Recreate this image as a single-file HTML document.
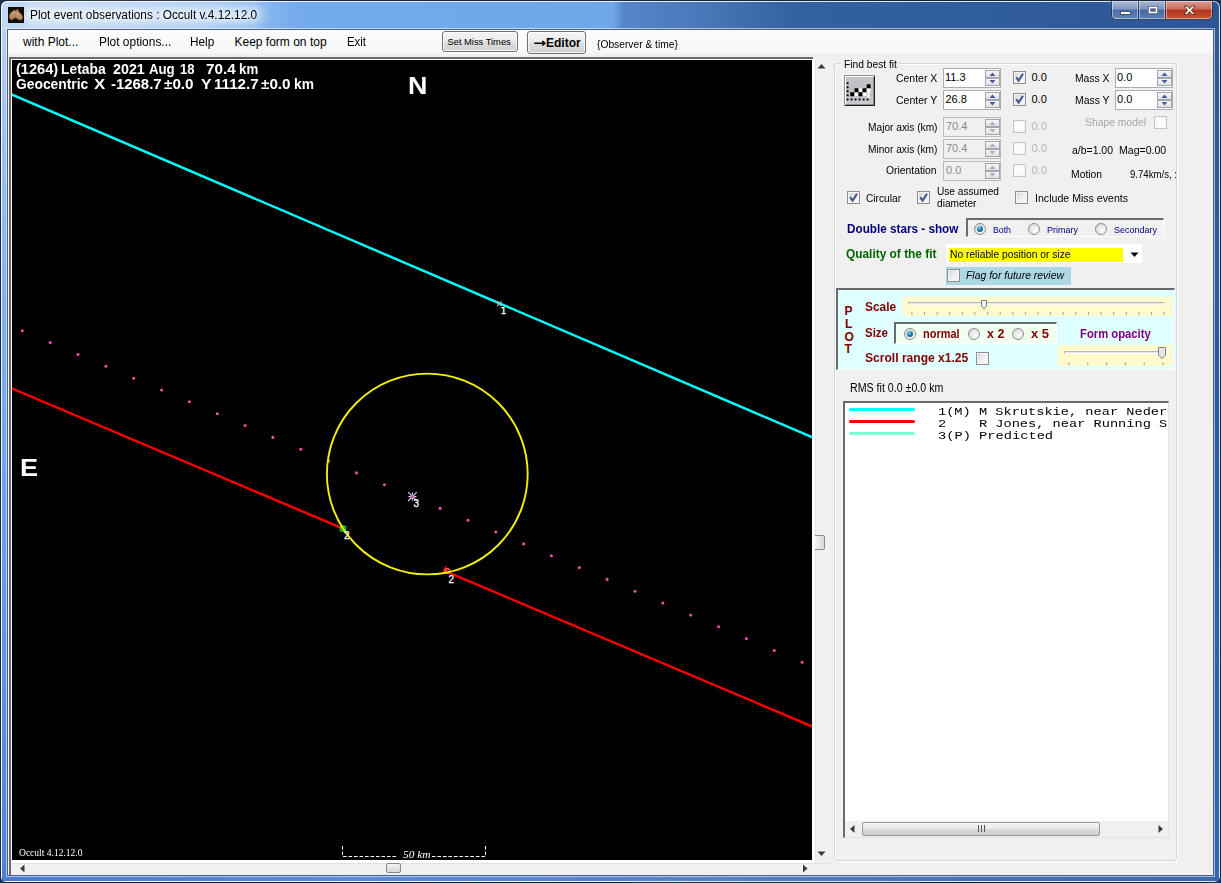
<!DOCTYPE html>
<html lang="en">
<head>
<meta charset="utf-8">
<title>Plot event observations : Occult v.4.12.12.0</title>
<style>

html,body{margin:0;padding:0;background:#1d2f52;}
body{width:1221px;height:883px;overflow:hidden;position:relative;}
#win{position:absolute;left:0;top:0;width:1221px;height:883px;overflow:hidden;font:11px "Liberation Sans",sans-serif;}
#win div,#win svg,#win span.t{position:absolute;box-sizing:border-box;}
span.t{white-space:pre;line-height:normal;transform-origin:0 50%;margin:0;padding:0;}
.frame{left:0;top:0;width:1221px;height:883px;border-radius:7px 7px 6px 6px;
 background:linear-gradient(90deg,#c2d8f3 0px,#bdd5f3 60px,#a6c9f2 200px,#86b7ef 262px,#73aaeb 300px,#6fa7ea 612px,#5686c9 622px,#4a78b8 700px,#33619f 800px,#2e5a9a 1100px,#2c5594 1221px);
 border:1px solid #17253f;box-shadow:inset 0 0 0 1px rgba(255,255,255,.85);}
.cbtn{top:1px;height:19px;border:1px solid rgba(20,35,70,.75);border-top:none;box-shadow:inset 0 0 0 1px rgba(255,255,255,.45);}
.chk{width:13px;height:13px;border:1px solid #8e8f8f;background:linear-gradient(135deg,#cfd2d6 0%,#eceef0 50%,#fbfbfb 100%);box-shadow:inset 0 0 0 1px #f4f4f4;}
.chk.dis{border-color:#c3c6ca;background:#fbfbfc;}
.rad{width:12px;height:12px;border-radius:50%;border:1px solid #8e8f8f;background:radial-gradient(circle at 65% 65%,#fdfdfd 0%,#e4e6e8 55%,#c4c7ca 100%);}
.rad.on::after{content:"";position:absolute;left:2px;top:2px;width:6px;height:6px;border-radius:50%;background:radial-gradient(circle at 38% 32%,#8fdcf2 0%,#1e86b6 42%,#0a3c66 100%);}
.num{width:58px;height:20px;border:1px solid #abadb3;background:#fff;}
.num.dis{background:#f0f0f0;border-color:#b9bcc2;}
.spb{left:41px;width:15px;height:8px;border:1px solid #a3a6ab;background:linear-gradient(#f7f7f7,#dfe1e4);}
.sunk{border-style:solid;border-width:2px 1px 1px 2px;border-color:#6a6a6a #fff #fff #6a6a6a;}
.btn{border:1px solid #707070;border-radius:3px;background:linear-gradient(#f4f4f4 0%,#ececec 48%,#dedede 52%,#d1d1d1 100%);box-shadow:inset 0 0 0 1px rgba(255,255,255,.8);}

</style>
</head>
<body>
<div id="win">
<div class="frame" style="left:0px;top:0px;width:1221px;height:883px;"></div>
<div style="left:24px;top:6px;width:240px;height:18px;background:rgba(255,255,255,.55);filter:blur(6px);border-radius:9px;"></div>
<svg width="16" height="16" viewBox="0 0 16 16" style="left:8px;top:7px"><rect width="16" height="16" fill="#120d08"/><path d="M1.3 9 L2.4 6.2 L4.9 3.9 L6.6 3.1 L7.8 4.4 L9.3 2 L10.9 5 L13.4 7.4 L14.8 10 L13.6 12.6 L11 12.9 L9.1 11.2 L7 10.7 L4.2 12.5 L2 12.1 Z" fill="#b78a62" stroke="#8d6848" stroke-width=".8" stroke-linejoin="round"/><path d="M3.4 7.6 L6.4 5 L9 6.2 L11.2 8" fill="none" stroke="#d6ab80" stroke-width="1.1"/></svg>
<div class="cbtn" style="left:1111px;top:1px;width:28px;height:19px;border-radius:0 0 0 5px;background:linear-gradient(#a9bbd8 0%,#8299c0 45%,#4b6ea4 50%,#5f84b8 100%);"></div>
<div class="cbtn" style="left:1138px;top:1px;width:28px;height:19px;background:linear-gradient(#a5b7d5 0%,#7c94bc 45%,#466aa0 50%,#587db2 100%);"></div>
<div class="cbtn" style="left:1165px;top:1px;width:48px;height:19px;border-radius:0 0 5px 0;background:linear-gradient(#dc9f94 0%,#c96a5a 45%,#b3321c 50%,#c35633 100%);"></div>
<svg width="102" height="19" viewBox="0 0 102 19" style="left:1111px;top:1px"><rect x="9.5" y="10.5" width="10" height="3" fill="#fff" stroke="#44536e" stroke-width="1"/><rect x="37.5" y="5.5" width="9" height="7" fill="none" stroke="#44536e" stroke-width="1"/><rect x="38.5" y="6.5" width="7" height="5" fill="none" stroke="#fff" stroke-width="1.6"/><rect x="40" y="8" width="4" height="2" fill="#56709a" stroke="#44536e" stroke-width=".6"/><path d="M73 5 L76 5 L78.5 7.8 L81 5 L84 5 L80.4 9.2 L84 13.5 L81 13.5 L78.5 10.6 L76 13.5 L73 13.5 L76.6 9.2 Z" fill="#fff" stroke="#5a2a24" stroke-width=".9"/></svg>
<div style="left:2px;top:30px;width:5px;height:851px;background:linear-gradient(180deg,#b9d0f1 0px,#9dbff0 120px,#84b1ef 260px,#6fa4ee 430px,#5f92e2 650px,#4f7fd2 851px);"></div>
<div style="left:2px;top:876px;width:1217px;height:5px;background:linear-gradient(90deg,#4c7bd3 0px,#5b8ad6 350px,#5482cc 700px,#4570b4 1000px,#3c67aa 1217px);"></div>
<div style="left:1214px;top:30px;width:5px;height:851px;background:linear-gradient(180deg,#2f5a9c 0px,#2c5aa4 400px,#3466b4 851px);"></div>
<div style="left:6px;top:28px;width:1209px;height:849px;background:rgba(255,255,255,.55);"></div>
<div style="left:7px;top:29px;width:1207px;height:847px;background:#4d5f7a;"></div>
<div style="left:8px;top:30px;width:1205px;height:845px;background:#f0f0f0;"></div>
<div style="left:8px;top:30px;width:1205px;height:24px;background:linear-gradient(#fcfcfd,#f6f7f9);"></div>
<div class="btn" style="left:442px;top:31px;width:76px;height:21px;"></div>
<div class="btn" style="left:527px;top:31px;width:59px;height:23px;"></div>
<div style="left:9px;top:57px;width:804px;height:818px;background:#6b676d;"></div>
<div style="left:11px;top:59px;width:818px;height:816px;background:#fff;"></div>
<div style="left:12px;top:60px;width:800px;height:800px;background:#000;"></div>
<div style="left:815px;top:59px;width:14px;height:804px;background:#f1f1f3;border-left:1px solid #e4e4e8;"></div>
<div style="left:815px;top:535px;width:10px;height:15px;background:linear-gradient(90deg,#f3f3f3,#d9dadc);border:1px solid #8d8791;border-left:none;border-radius:0 2px 2px 0;"></div>
<div style="left:11px;top:863px;width:818px;height:12px;background:#f1f1f3;border-top:1px solid #e2e2e6;"></div>
<div style="left:386px;top:863px;width:15px;height:10px;background:linear-gradient(#f3f3f3,#d4d5d8);border:1px solid #8d8791;border-radius:2px;"></div>
<svg width="830" height="20" viewBox="0 0 830 20" style="left:0;top:860px"><path d="M20 8.5 L24.5 4.5 L24.5 12.5 Z" fill="#3c3c3c"/><path d="M807.5 8.5 L803 4.5 L803 12.5 Z" fill="#3c3c3c"/></svg>
<svg width="14" height="804" viewBox="0 0 14 804" style="left:815px;top:59px"><path d="M6.5 5 L2.5 9.5 L10.5 9.5 Z" fill="#3c3c3c"/><path d="M6.5 797 L2.5 792.5 L10.5 792.5 Z" fill="#3c3c3c"/></svg>
<div style="left:829px;top:54px;width:384px;height:821px;background:#f0f0f0;"></div>
<svg width="800" height="800" viewBox="0 0 800 800" style="left:12px;top:60px"><line x1="-2" y1="33.8" x2="802" y2="378" stroke="#00ffff" stroke-width="2.4"/><line x1="-2" y1="327.6" x2="330.6" y2="468.4" stroke="#ff0000" stroke-width="2.4"/><line x1="432" y1="510.6" x2="802" y2="667.2" stroke="#ff0000" stroke-width="2.4"/><circle cx="10.3" cy="270.8" r="1.55" fill="#e64fae"/><circle cx="38.2" cy="282.6" r="1.55" fill="#e64fae"/><circle cx="66.0" cy="294.5" r="1.55" fill="#e64fae"/><circle cx="93.9" cy="306.3" r="1.55" fill="#e64fae"/><circle cx="121.7" cy="318.2" r="1.55" fill="#e64fae"/><circle cx="149.6" cy="330.0" r="1.55" fill="#e64fae"/><circle cx="177.4" cy="341.8" r="1.55" fill="#e64fae"/><circle cx="205.3" cy="353.7" r="1.55" fill="#e64fae"/><circle cx="233.1" cy="365.5" r="1.55" fill="#e64fae"/><circle cx="260.9" cy="377.4" r="1.55" fill="#e64fae"/><circle cx="288.8" cy="389.2" r="1.55" fill="#e64fae"/><circle cx="316.7" cy="401.0" r="1.55" fill="#e64fae"/><circle cx="344.5" cy="412.9" r="1.55" fill="#e64fae"/><circle cx="372.4" cy="424.7" r="1.55" fill="#e64fae"/><circle cx="400.2" cy="436.6" r="1.55" fill="#e64fae"/><circle cx="428.1" cy="448.4" r="1.55" fill="#e64fae"/><circle cx="455.9" cy="460.2" r="1.55" fill="#e64fae"/><circle cx="483.8" cy="472.1" r="1.55" fill="#e64fae"/><circle cx="511.6" cy="483.9" r="1.55" fill="#e64fae"/><circle cx="539.4" cy="495.8" r="1.55" fill="#e64fae"/><circle cx="567.3" cy="507.6" r="1.55" fill="#e64fae"/><circle cx="595.1" cy="519.4" r="1.55" fill="#e64fae"/><circle cx="623.0" cy="531.3" r="1.55" fill="#e64fae"/><circle cx="650.9" cy="543.1" r="1.55" fill="#e64fae"/><circle cx="678.7" cy="555.0" r="1.55" fill="#e64fae"/><circle cx="706.5" cy="566.8" r="1.55" fill="#e64fae"/><circle cx="734.4" cy="578.6" r="1.55" fill="#e64fae"/><circle cx="762.2" cy="590.5" r="1.55" fill="#e64fae"/><circle cx="790.1" cy="602.3" r="1.55" fill="#e64fae"/><path d="M485 241.5 L489.5 246 M489.5 241.5 L485 246" stroke="#b9b9c9" stroke-width="1.1"/><circle cx="330.9" cy="468.6" r="2.6" fill="none" stroke="#00e000" stroke-width="1.5"/><path d="M327.6 471 L334.4 466" stroke="#19a83c" stroke-width="1.4"/><path d="M430.5 512.5 L433.5 505.2 L436 511 Z" fill="#ff0000"/><circle cx="435.3" cy="511" r="2.3" fill="none" stroke="#ff7d3a" stroke-width="1.2"/><path d="M396 432.2 L404.8 441 M404.8 432.2 L396 441 M400.4 432.6 L400.4 440.6 M396.4 436.6 L404.4 436.6" stroke="#c7cbe6" stroke-width="1.2"/><circle cx="400.4" cy="436.6" r="1.5" fill="#f04fa8"/><circle cx="415.3" cy="414" r="100.4" fill="none" stroke="#f2f200" stroke-width="1.9"/><path d="M330.5 786 L330.5 796.5 L386 796.5" fill="none" stroke="#fff" stroke-width="1" stroke-dasharray="3.6 1.9"/><path d="M473.5 786 L473.5 796.5 L420 796.5" fill="none" stroke="#fff" stroke-width="1" stroke-dasharray="3.6 1.9"/></svg>
<div style="left:834px;top:63px;width:343px;height:798px;border:1px solid #d2d6dd;border-radius:3px;box-shadow:inset 1px 1px 0 #fff,1px 1px 0 #fff;"></div>
<div style="left:841px;top:58px;width:58px;height:12px;background:#f0f0f0;"></div>
<div style="left:844px;top:75px;width:31px;height:31px;background:#8f9390;"></div>
<div style="left:845px;top:76px;width:30px;height:30px;background:#1c1c1c;"></div>
<div style="left:845px;top:76px;width:28.6px;height:28.6px;background:#fff;"></div>
<div style="left:846.4px;top:77.4px;width:27.2px;height:27.2px;background:#8c8c8c;"></div>
<div style="left:846.4px;top:77.4px;width:26.4px;height:26.4px;background:linear-gradient(180deg,#c6c3c8 0%,#c0bdc2 55%,#cdcbcf 100%);"></div>
<svg width="31" height="31" viewBox="0 0 31 31" style="left:844px;top:75px"><rect x="2.6" y="7.2" width="2" height="2" rx=".6" fill="#000"/><rect x="2.6" y="11.2" width="2" height="2" rx=".6" fill="#000"/><rect x="2.6" y="15.3" width="2" height="2" rx=".6" fill="#000"/><rect x="2.6" y="19.3" width="2" height="2" rx=".6" fill="#000"/><rect x="2.6" y="23.4" width="2" height="2" rx=".6" fill="#000"/><rect x="6.6" y="23.4" width="2" height="2" rx=".6" fill="#000"/><rect x="10.6" y="23.4" width="2" height="2" rx=".6" fill="#000"/><rect x="14.6" y="23.4" width="2" height="2" rx=".6" fill="#000"/><rect x="18.6" y="23.4" width="2" height="2" rx=".6" fill="#000"/><rect x="22.6" y="23.4" width="2" height="2" rx=".6" fill="#000"/><rect x="10.7" y="17.4" width="3.6" height="3.6" fill="#fff"/><rect x="14.6" y="13.4" width="3.6" height="3.6" fill="#fff"/><rect x="18.7" y="17.4" width="3.6" height="3.6" fill="#fff"/><rect x="22.8" y="13.4" width="3.6" height="3.6" fill="#fff"/><rect x="23.2" y="17" width="2.6" height="6" fill="#eee"/><rect x="6.2" y="17.2" width="4" height="4" rx=".5" fill="#000"/><rect x="10.5" y="13.2" width="4" height="4" rx=".5" fill="#000"/><rect x="14.4" y="17.2" width="4" height="4" rx=".5" fill="#000"/><rect x="18.5" y="13.2" width="4" height="4" rx=".5" fill="#000"/><rect x="22.6" y="9.3" width="4" height="4" rx=".5" fill="#000"/></svg>
<div class="num" style="left:943px;top:68px"><div class="spb" style="top:1px"><svg width="13" height="6" viewBox="0 0 13 6" style="left:0;top:0"><path d="M3.5 5 L6.5 1.6 L9.5 5 Z" fill="#4a5aa2"/></svg></div><div class="spb" style="top:9px"><svg width="13" height="6" viewBox="0 0 13 6" style="left:0;top:0"><path d="M3.5 1 L6.5 4.4 L9.5 1 Z" fill="#4a5aa2"/></svg></div></div>
<div class="num" style="left:943px;top:90px"><div class="spb" style="top:1px"><svg width="13" height="6" viewBox="0 0 13 6" style="left:0;top:0"><path d="M3.5 5 L6.5 1.6 L9.5 5 Z" fill="#4a5aa2"/></svg></div><div class="spb" style="top:9px"><svg width="13" height="6" viewBox="0 0 13 6" style="left:0;top:0"><path d="M3.5 1 L6.5 4.4 L9.5 1 Z" fill="#4a5aa2"/></svg></div></div>
<div class="num dis" style="left:943px;top:117px"><div class="spb" style="top:1px"><svg width="13" height="6" viewBox="0 0 13 6" style="left:0;top:0"><path d="M3.5 5 L6.5 1.6 L9.5 5 Z" fill="#a9b0c8"/></svg></div><div class="spb" style="top:9px"><svg width="13" height="6" viewBox="0 0 13 6" style="left:0;top:0"><path d="M3.5 1 L6.5 4.4 L9.5 1 Z" fill="#a9b0c8"/></svg></div></div>
<div class="num dis" style="left:943px;top:139px"><div class="spb" style="top:1px"><svg width="13" height="6" viewBox="0 0 13 6" style="left:0;top:0"><path d="M3.5 5 L6.5 1.6 L9.5 5 Z" fill="#a9b0c8"/></svg></div><div class="spb" style="top:9px"><svg width="13" height="6" viewBox="0 0 13 6" style="left:0;top:0"><path d="M3.5 1 L6.5 4.4 L9.5 1 Z" fill="#a9b0c8"/></svg></div></div>
<div class="num dis" style="left:943px;top:161px"><div class="spb" style="top:1px"><svg width="13" height="6" viewBox="0 0 13 6" style="left:0;top:0"><path d="M3.5 5 L6.5 1.6 L9.5 5 Z" fill="#a9b0c8"/></svg></div><div class="spb" style="top:9px"><svg width="13" height="6" viewBox="0 0 13 6" style="left:0;top:0"><path d="M3.5 1 L6.5 4.4 L9.5 1 Z" fill="#a9b0c8"/></svg></div></div>
<div class="num" style="left:1115px;top:68px"><div class="spb" style="top:1px"><svg width="13" height="6" viewBox="0 0 13 6" style="left:0;top:0"><path d="M3.5 5 L6.5 1.6 L9.5 5 Z" fill="#4a5aa2"/></svg></div><div class="spb" style="top:9px"><svg width="13" height="6" viewBox="0 0 13 6" style="left:0;top:0"><path d="M3.5 1 L6.5 4.4 L9.5 1 Z" fill="#4a5aa2"/></svg></div></div>
<div class="num" style="left:1115px;top:90px"><div class="spb" style="top:1px"><svg width="13" height="6" viewBox="0 0 13 6" style="left:0;top:0"><path d="M3.5 5 L6.5 1.6 L9.5 5 Z" fill="#4a5aa2"/></svg></div><div class="spb" style="top:9px"><svg width="13" height="6" viewBox="0 0 13 6" style="left:0;top:0"><path d="M3.5 1 L6.5 4.4 L9.5 1 Z" fill="#4a5aa2"/></svg></div></div>
<div class="chk" style="left:1013px;top:71px"><svg width="11" height="11" viewBox="0 0 11 11" style="left:0;top:0"><path d="M2.2 5.2 L4.6 8.6 L9 1.8" fill="none" stroke="#3f5697" stroke-width="2.1"/></svg></div>
<div class="chk" style="left:1013px;top:93px"><svg width="11" height="11" viewBox="0 0 11 11" style="left:0;top:0"><path d="M2.2 5.2 L4.6 8.6 L9 1.8" fill="none" stroke="#3f5697" stroke-width="2.1"/></svg></div>
<div class="chk dis" style="left:1013px;top:120px"></div>
<div class="chk dis" style="left:1013px;top:142px"></div>
<div class="chk dis" style="left:1013px;top:164px"></div>
<div class="chk dis" style="left:1154px;top:116px"></div>
<div class="chk" style="left:847px;top:191px"><svg width="11" height="11" viewBox="0 0 11 11" style="left:0;top:0"><path d="M2.2 5.2 L4.6 8.6 L9 1.8" fill="none" stroke="#3f5697" stroke-width="2.1"/></svg></div>
<div class="chk" style="left:917px;top:191px"><svg width="11" height="11" viewBox="0 0 11 11" style="left:0;top:0"><path d="M2.2 5.2 L4.6 8.6 L9 1.8" fill="none" stroke="#3f5697" stroke-width="2.1"/></svg></div>
<div class="chk" style="left:1015px;top:191px"></div>
<div class="sunk" style="left:966px;top:218px;width:198px;height:19px;background:#f0f0f0;"></div>
<div class="rad on" style="left:974px;top:223px"></div>
<div class="rad" style="left:1028px;top:223px"></div>
<div class="rad" style="left:1095px;top:223px"></div>
<div style="left:946px;top:244px;width:196px;height:19px;background:#fff;"></div>
<div style="left:949px;top:248px;width:174px;height:14px;background:#ffff00;"></div>
<svg width="10" height="6" viewBox="0 0 10 6" style="left:1130px;top:252px"><path d="M0.5 0.5 L8.5 0.5 L4.5 5 Z" fill="#000"/></svg>
<div style="left:946px;top:267px;width:125px;height:18px;background:#add8e6;"></div>
<div class="chk" style="left:947px;top:269px"></div>
<div style="left:836px;top:288px;width:339px;height:82px;background:#e0ffff;border-style:solid;border-width:2px 1px 1px 2px;border-color:#6a6a6a #fff #fff #6a6a6a;"></div>
<div style="left:903px;top:297px;width:269px;height:19px;background:#fff9cc;"></div>
<div style="left:908px;top:302px;width:257px;height:3px;background:#e7eaea;border:1px solid #b5b9bd;border-bottom-color:#fcfcfc;border-right-color:#fcfcfc;"></div>
<svg width="269" height="19" viewBox="0 0 269 19" style="left:903px;top:297px"><rect x="8.4" y="15" width="1" height="3" fill="#9da3a8"/><rect x="21.0" y="15" width="1" height="3" fill="#9da3a8"/><rect x="33.6" y="15" width="1" height="3" fill="#9da3a8"/><rect x="46.2" y="15" width="1" height="3" fill="#9da3a8"/><rect x="58.8" y="15" width="1" height="3" fill="#9da3a8"/><rect x="71.4" y="15" width="1" height="3" fill="#9da3a8"/><rect x="84.1" y="15" width="1" height="3" fill="#9da3a8"/><rect x="96.7" y="15" width="1" height="3" fill="#9da3a8"/><rect x="109.3" y="15" width="1" height="3" fill="#9da3a8"/><rect x="121.9" y="15" width="1" height="3" fill="#9da3a8"/><rect x="134.5" y="15" width="1" height="3" fill="#9da3a8"/><rect x="147.1" y="15" width="1" height="3" fill="#9da3a8"/><rect x="159.7" y="15" width="1" height="3" fill="#9da3a8"/><rect x="172.3" y="15" width="1" height="3" fill="#9da3a8"/><rect x="184.9" y="15" width="1" height="3" fill="#9da3a8"/><rect x="197.5" y="15" width="1" height="3" fill="#9da3a8"/><rect x="210.2" y="15" width="1" height="3" fill="#9da3a8"/><rect x="222.8" y="15" width="1" height="3" fill="#9da3a8"/><rect x="235.4" y="15" width="1" height="3" fill="#9da3a8"/><rect x="248.0" y="15" width="1" height="3" fill="#9da3a8"/><rect x="260.6" y="15" width="1" height="3" fill="#9da3a8"/><path d="M78.5 3.5 L83.5 3.5 L83.5 9 L81 12 L78.5 9 Z" fill="#ececec" stroke="#7d8288" stroke-width="1"/></svg>
<div class="sunk" style="left:894px;top:322px;width:163px;height:22px;background:#f0fff0;"></div>
<div class="rad on" style="left:904px;top:328px"></div>
<div class="rad" style="left:968px;top:328px"></div>
<div class="rad" style="left:1012px;top:328px"></div>
<div class="chk" style="left:976px;top:352px"></div>
<div style="left:1058px;top:345px;width:114px;height:21px;background:#fff9cc;"></div>
<div style="left:1064px;top:351px;width:102px;height:3px;background:#e7eaea;border:1px solid #b5b9bd;border-bottom-color:#fcfcfc;border-right-color:#fcfcfc;"></div>
<svg width="114" height="21" viewBox="0 0 114 21" style="left:1058px;top:345px"><rect x="10.5" y="17" width="1" height="3" fill="#9da3a8"/><rect x="29.3" y="17" width="1" height="3" fill="#9da3a8"/><rect x="48.1" y="17" width="1" height="3" fill="#9da3a8"/><rect x="66.9" y="17" width="1" height="3" fill="#9da3a8"/><rect x="85.7" y="17" width="1" height="3" fill="#9da3a8"/><rect x="104.5" y="17" width="1" height="3" fill="#9da3a8"/><path d="M100.5 2.5 L107.5 2.5 L107.5 10 L104 13.5 L100.5 10 Z" fill="#e6e6e6" stroke="#7d8288" stroke-width="1"/></svg>
<div style="left:843px;top:401px;width:326px;height:437px;background:#fff;border-style:solid;border-width:2px 1px 1px 2px;border-color:#6a6a6a #e3e3e3 #e3e3e3 #6a6a6a;"></div>
<div style="left:849px;top:408px;width:66px;height:3px;background:#00ffff;border-radius:1.5px;"></div>
<div style="left:849px;top:420px;width:66px;height:3px;background:#ff0000;border-radius:1.5px;"></div>
<div style="left:849px;top:432px;width:66px;height:3px;background:#7fffd4;border-radius:1.5px;"></div>
<div style="left:845px;top:821px;width:323px;height:16px;background:#f0f0f2;"></div>
<div style="left:862px;top:822px;width:238px;height:14px;background:linear-gradient(#f5f5f5 0%,#e9e9eb 45%,#d9dadc 55%,#c9cacd 100%);border:1px solid #979aa0;border-radius:2px;"></div>
<svg width="323" height="16" viewBox="0 0 323 16" style="left:845px;top:821px"><path d="M5 8 L9.5 4 L9.5 12 Z" fill="#3c3c3c"/><path d="M318 8 L313.5 4 L313.5 12 Z" fill="#3c3c3c"/><path d="M133.5 4 L133.5 11 M136.5 4 L136.5 11 M139.5 4 L139.5 11" stroke="#50545c" stroke-width="1"/></svg>
<!-- text layer -->
<span class="t" style="left:29.5px;top:8px;transform:scaleX(0.9849);font:normal normal 12px 'Liberation Sans', sans-serif;color:#000;text-shadow:0 0 5px #fff,0 0 8px #fff;">Plot event observations : Occult v.4.12.12.0</span>
<span class="t" style="left:23.0px;top:35px;font:normal normal 12px 'Liberation Sans', sans-serif;color:#000;">with Plot...</span>
<span class="t" style="left:98.5px;top:35px;transform:scaleX(0.9942);font:normal normal 12px 'Liberation Sans', sans-serif;color:#000;">Plot options...</span>
<span class="t" style="left:190.0px;top:35px;transform:scaleX(0.9843);font:normal normal 12px 'Liberation Sans', sans-serif;color:#000;">Help</span>
<span class="t" style="left:234.5px;top:35px;font:normal normal 12px 'Liberation Sans', sans-serif;color:#000;">Keep form on top</span>
<span class="t" style="left:346.5px;top:35px;transform:scaleX(0.9493);font:normal normal 12px 'Liberation Sans', sans-serif;color:#000;">Exit</span>
<span class="t" style="left:447.5px;top:37px;font:normal normal 9.33px 'Liberation Sans', sans-serif;color:#000;">Set Miss Times</span>
<span class="t" style="left:532.5px;top:36px;transform:scaleX(1.3118);font:normal bold 12px 'DejaVu Sans', 'Liberation Sans', sans-serif;color:#000;">→</span>
<span class="t" style="left:546.0px;top:36px;font:normal bold 12px 'Liberation Sans', sans-serif;color:#000;">Editor</span>
<span class="t" style="left:596.5px;top:38px;transform:scaleX(0.9317);font:normal normal 11px 'Liberation Sans', sans-serif;color:#000;">{Observer &amp; time}</span>
<span class="t" style="left:15.5px;top:61px;transform:scaleX(1.0428);font:normal bold 14px 'Liberation Sans', sans-serif;color:#fff;">(1264)</span>
<span class="t" style="left:60.5px;top:61px;transform:scaleX(0.9884);font:normal bold 14px 'Liberation Sans', sans-serif;color:#fff;">Letaba</span>
<span class="t" style="left:112.5px;top:61px;transform:scaleX(1.0207);font:normal bold 14px 'Liberation Sans', sans-serif;color:#fff;">2021</span>
<span class="t" style="left:148.5px;top:61px;transform:scaleX(0.9442);font:normal bold 14px 'Liberation Sans', sans-serif;color:#fff;">Aug</span>
<span class="t" style="left:179.5px;top:61px;transform:scaleX(0.9308);font:normal bold 14px 'Liberation Sans', sans-serif;color:#fff;">18</span>
<span class="t" style="left:206.0px;top:61px;transform:scaleX(1.0862);font:normal bold 14px 'Liberation Sans', sans-serif;color:#fff;">70.4</span>
<span class="t" style="left:239.0px;top:61px;transform:scaleX(0.9489);font:normal bold 14px 'Liberation Sans', sans-serif;color:#fff;">km</span>
<span class="t" style="left:15.5px;top:76px;transform:scaleX(0.9885);font:normal bold 14px 'Liberation Sans', sans-serif;color:#fff;">Geocentric</span>
<span class="t" style="left:93.5px;top:76px;transform:scaleX(1.1987);font:normal bold 14px 'Liberation Sans', sans-serif;color:#fff;">X</span>
<span class="t" style="left:110.5px;top:76px;transform:scaleX(1.0656);font:normal bold 14px 'Liberation Sans', sans-serif;color:#fff;">-1268.7</span>
<span class="t" style="left:163.5px;top:76px;transform:scaleX(1.0900);font:normal bold 14px 'Liberation Sans', sans-serif;color:#fff;">±0.0</span>
<span class="t" style="left:200.5px;top:76px;transform:scaleX(1.1237);font:normal bold 14px 'Liberation Sans', sans-serif;color:#fff;">Y</span>
<span class="t" style="left:213.5px;top:76px;transform:scaleX(1.0804);font:normal bold 14px 'Liberation Sans', sans-serif;color:#fff;">1112.7</span>
<span class="t" style="left:261.0px;top:76px;transform:scaleX(1.0900);font:normal bold 14px 'Liberation Sans', sans-serif;color:#fff;">±0.0</span>
<span class="t" style="left:294.0px;top:76px;transform:scaleX(0.9835);font:normal bold 14px 'Liberation Sans', sans-serif;color:#fff;">km</span>
<span class="t" style="left:407.5px;top:72px;transform:scaleX(1.1186);font:normal bold 24px 'Liberation Sans', sans-serif;color:#fff;">N</span>
<span class="t" style="left:19.5px;top:454px;transform:scaleX(1.1301);font:normal bold 24px 'Liberation Sans', sans-serif;color:#fff;">E</span>
<span class="t" style="left:19.0px;top:846px;transform:scaleX(0.8940);font:normal normal 10.67px 'Liberation Serif', serif;color:#fff;">Occult 4.12.12.0</span>
<span class="t" style="left:402.5px;top:848px;transform:scaleX(1.0718);font:italic normal 10.67px 'Liberation Serif', serif;color:#fff;">50 km</span>
<span class="t" style="left:500.5px;top:305px;font:normal normal 9.5px 'DejaVu Sans', 'Liberation Sans', sans-serif;color:#fff;-webkit-text-stroke:.25px #fff;">1</span>
<span class="t" style="left:344.0px;top:530px;font:normal normal 10px 'Liberation Sans', sans-serif;color:#fff;-webkit-text-stroke:.25px #fff;">2</span>
<span class="t" style="left:448.5px;top:574px;font:normal normal 10px 'Liberation Sans', sans-serif;color:#fff;-webkit-text-stroke:.25px #fff;">2</span>
<span class="t" style="left:413.5px;top:498px;font:normal normal 10px 'Liberation Sans', sans-serif;color:#fff;-webkit-text-stroke:.25px #fff;">3</span>
<span class="t" style="left:843.5px;top:58px;transform:scaleX(0.9304);font:normal normal 11px 'Liberation Sans', sans-serif;color:#000;">Find best fit</span>
<span class="t" style="left:895.5px;top:72px;transform:scaleX(0.9511);font:normal normal 11px 'Liberation Sans', sans-serif;color:#000;">Center X</span>
<span class="t" style="left:895.5px;top:94px;transform:scaleX(0.9556);font:normal normal 11px 'Liberation Sans', sans-serif;color:#000;">Center Y</span>
<span class="t" style="left:867.5px;top:121px;transform:scaleX(0.9245);font:normal normal 11px 'Liberation Sans', sans-serif;color:#000;">Major axis (km)</span>
<span class="t" style="left:867.5px;top:143px;transform:scaleX(0.9219);font:normal normal 11px 'Liberation Sans', sans-serif;color:#000;">Minor axis (km)</span>
<span class="t" style="left:885.5px;top:164px;transform:scaleX(0.9403);font:normal normal 11px 'Liberation Sans', sans-serif;color:#000;">Orientation</span>
<span class="t" style="left:945.0px;top:71px;font:normal normal 11px 'Liberation Sans', sans-serif;color:#000;">11.3</span>
<span class="t" style="left:945.5px;top:93px;font:normal normal 11px 'Liberation Sans', sans-serif;color:#000;">26.8</span>
<span class="t" style="left:946.0px;top:120px;font:normal normal 11px 'Liberation Sans', sans-serif;color:#8a8a8a;">70.4</span>
<span class="t" style="left:946.0px;top:142px;font:normal normal 11px 'Liberation Sans', sans-serif;color:#8a8a8a;">70.4</span>
<span class="t" style="left:946.0px;top:164px;font:normal normal 11px 'Liberation Sans', sans-serif;color:#8a8a8a;">0.0</span>
<span class="t" style="left:1031.5px;top:71px;font:normal normal 11px 'Liberation Sans', sans-serif;color:#000;">0.0</span>
<span class="t" style="left:1031.5px;top:93px;font:normal normal 11px 'Liberation Sans', sans-serif;color:#000;">0.0</span>
<span class="t" style="left:1031.5px;top:120px;font:normal normal 11px 'Liberation Sans', sans-serif;color:#b4b4b4;">0.0</span>
<span class="t" style="left:1031.5px;top:142px;font:normal normal 11px 'Liberation Sans', sans-serif;color:#b4b4b4;">0.0</span>
<span class="t" style="left:1031.5px;top:164px;font:normal normal 11px 'Liberation Sans', sans-serif;color:#b4b4b4;">0.0</span>
<span class="t" style="left:1074.5px;top:72px;transform:scaleX(0.9404);font:normal normal 11px 'Liberation Sans', sans-serif;color:#000;">Mass X</span>
<span class="t" style="left:1074.5px;top:94px;transform:scaleX(0.9456);font:normal normal 11px 'Liberation Sans', sans-serif;color:#000;">Mass Y</span>
<span class="t" style="left:1117.0px;top:71px;font:normal normal 11px 'Liberation Sans', sans-serif;color:#000;">0.0</span>
<span class="t" style="left:1117.0px;top:93px;font:normal normal 11px 'Liberation Sans', sans-serif;color:#000;">0.0</span>
<span class="t" style="left:1084.5px;top:116px;transform:scaleX(0.9425);font:normal normal 11px 'Liberation Sans', sans-serif;color:#a6a6a6;">Shape model</span>
<span class="t" style="left:1072.0px;top:145px;transform:scaleX(1.0454);font:normal normal 10px 'Liberation Sans', sans-serif;color:#000;">a/b=1.00</span>
<span class="t" style="left:1118.5px;top:145px;transform:scaleX(1.0544);font:normal normal 10px 'Liberation Sans', sans-serif;color:#000;">Mag=0.00</span>
<span class="t" style="left:1070.5px;top:169px;transform:scaleX(1.0361);font:normal normal 10px 'Liberation Sans', sans-serif;color:#000;">Motion</span>
<span class="t" style="left:1129.5px;top:169px;transform:scaleX(0.9610);font:normal normal 10px 'Liberation Sans', sans-serif;color:#000;">9.74km/s, :</span>
<span class="t" style="left:865.5px;top:192px;transform:scaleX(0.9260);font:normal normal 11px 'Liberation Sans', sans-serif;color:#000;">Circular</span>
<span class="t" style="left:936.5px;top:186px;transform:scaleX(1.0124);font:normal normal 10px 'Liberation Sans', sans-serif;color:#000;">Use assumed</span>
<span class="t" style="left:936.5px;top:198px;transform:scaleX(1.0127);font:normal normal 10px 'Liberation Sans', sans-serif;color:#000;">diameter</span>
<span class="t" style="left:1034.5px;top:192px;transform:scaleX(0.9637);font:normal normal 11px 'Liberation Sans', sans-serif;color:#000;">Include Miss events</span>
<span class="t" style="left:846.5px;top:222px;transform:scaleX(0.9769);font:normal bold 12px 'Liberation Sans', sans-serif;color:#000080;">Double stars - show</span>
<span class="t" style="left:992.5px;top:225px;transform:scaleX(0.9373);font:normal normal 9.33px 'Liberation Sans', sans-serif;color:#000080;">Both</span>
<span class="t" style="left:1046.5px;top:225px;transform:scaleX(0.9614);font:normal normal 9.33px 'Liberation Sans', sans-serif;color:#000080;">Primary</span>
<span class="t" style="left:1113.5px;top:225px;transform:scaleX(0.9639);font:normal normal 9.33px 'Liberation Sans', sans-serif;color:#000080;">Secondary</span>
<span class="t" style="left:846.0px;top:247px;transform:scaleX(0.9908);font:normal bold 12px 'Liberation Sans', sans-serif;color:#006400;">Quality of the fit</span>
<span class="t" style="left:950.0px;top:248px;transform:scaleX(0.9340);font:normal normal 11px 'Liberation Sans', sans-serif;color:#000;">No reliable position or size</span>
<span class="t" style="left:966.0px;top:269px;transform:scaleX(0.9484);font:italic normal 11px 'Liberation Sans', sans-serif;color:#000;">Flag for future review</span>
<span class="t" style="left:844.5px;top:304px;font:normal bold 12px 'Liberation Sans', sans-serif;color:#800000;">P</span>
<span class="t" style="left:845.0px;top:317px;font:normal bold 12px 'Liberation Sans', sans-serif;color:#800000;">L</span>
<span class="t" style="left:844.5px;top:330px;font:normal bold 12px 'Liberation Sans', sans-serif;color:#800000;">O</span>
<span class="t" style="left:844.5px;top:342px;font:normal bold 12px 'Liberation Sans', sans-serif;color:#800000;">T</span>
<span class="t" style="left:864.5px;top:300px;transform:scaleX(0.9949);font:normal bold 12px 'Liberation Sans', sans-serif;color:#800000;">Scale</span>
<span class="t" style="left:864.5px;top:326px;transform:scaleX(0.9577);font:normal bold 12px 'Liberation Sans', sans-serif;color:#800000;">Size</span>
<span class="t" style="left:865.0px;top:351px;transform:scaleX(1.0055);font:normal bold 12px 'Liberation Sans', sans-serif;color:#800000;">Scroll range x1.25</span>
<span class="t" style="left:922.5px;top:327px;transform:scaleX(0.9146);font:normal bold 12px 'Liberation Sans', sans-serif;color:#800000;">normal</span>
<span class="t" style="left:986.5px;top:327px;transform:scaleX(1.0367);font:normal bold 12px 'Liberation Sans', sans-serif;color:#800000;">x 2</span>
<span class="t" style="left:1030.5px;top:327px;transform:scaleX(1.0846);font:normal bold 12px 'Liberation Sans', sans-serif;color:#800000;">x 5</span>
<span class="t" style="left:1080.0px;top:327px;transform:scaleX(0.9382);font:normal bold 12px 'Liberation Sans', sans-serif;color:#800080;">Form opacity</span>
<span class="t" style="left:850.0px;top:381px;transform:scaleX(0.8871);font:normal normal 12px 'Liberation Sans', sans-serif;color:#000;">RMS fit 0.0 ±0.0 km</span>
<span class="t" style="left:938.0px;top:406px;transform:scaleX(1.2400);font:normal normal 11px 'Liberation Mono', monospace;color:#000;">1(M) M Skrutskie, near Neder</span>
<span class="t" style="left:938.0px;top:418px;transform:scaleX(1.2400);font:normal normal 11px 'Liberation Mono', monospace;color:#000;">2    R Jones, near Running S</span>
<span class="t" style="left:938.0px;top:430px;transform:scaleX(1.2454);font:normal normal 11px 'Liberation Mono', monospace;color:#000;">3(P) Predicted</span>
</div>
</body>
</html>
